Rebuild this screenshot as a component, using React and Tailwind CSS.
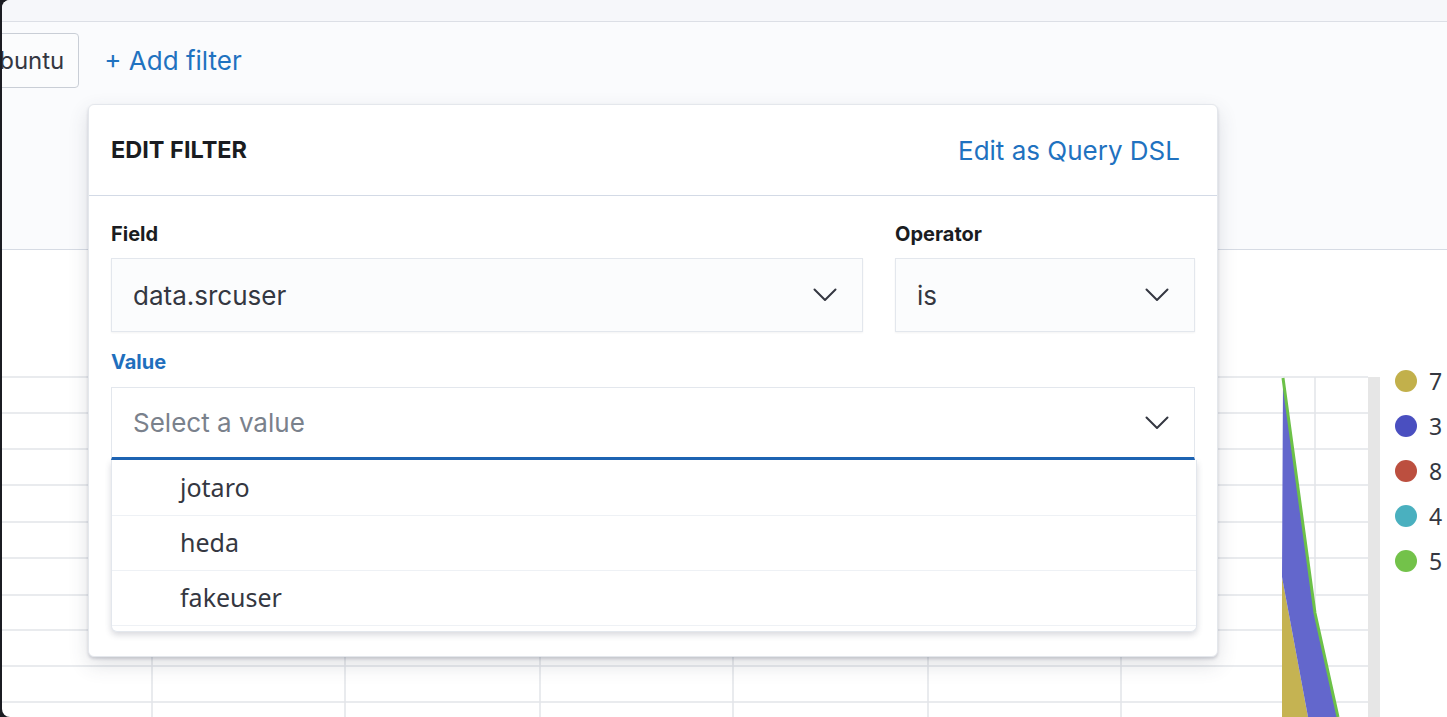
const Chevron = () => (
  <svg width="24" height="14" viewBox="0 0 24 14" fill="none">
    <polyline points="1.5,1.5 12,12 22.5,1.5" stroke="#343741" strokeWidth="2" strokeLinecap="round" strokeLinejoin="round" />
  </svg>
);

const Select = ({ text }) => (
  <div className="h-[74px] bg-[#fbfcfd] border border-[#e3e7ed] shadow-[0_1px_2px_rgba(0,0,0,0.05)] flex items-center justify-between pl-[21px] pr-[25px] text-[26px] text-[#343741]">
    <span>{text}</span>
    <Chevron />
  </div>
);

const hLines = [377, 413, 449, 485, 522, 558, 595, 630, 666, 702];
const vLines = [152, 345, 540, 733, 928, 1121, 1315];

const legend = [
  { c: '#c2b04b', n: '7' },
  { c: '#4a4fc0', n: '3' },
  { c: '#bc4f3f', n: '8' },
  { c: '#4ab0bf', n: '4' },
  { c: '#73c24a', n: '5' },
];

export default function App() {
  return (
    <div className="w-[1447px] h-[717px] bg-[#1b1c22] overflow-hidden font-['Inter',sans-serif]">
      <div className="relative ml-[2px] h-full rounded-l-[8px] overflow-hidden bg-white flex flex-col">
        <div className="h-[22px] shrink-0 bg-[#f6f7fa] border-b border-[#dcdfe6]" />
        <div className="h-[228px] shrink-0 bg-[#fafbfd] border-b border-[#d6dbe4] pt-[11px]">
          <div className="flex items-center gap-[25px]">
            <div className="ml-[-32px] h-[55px] pl-[14px] pr-[14px] flex items-center border border-[#c9ced6] rounded-[4px] bg-[#fbfcfd] text-[24px] text-[#343741]">
              ubuntu
            </div>
            <span className="text-[26px] text-[#1f72c0]">+ Add filter</span>
          </div>
        </div>
        <div className="flex-1 flex">
          <svg width="1393" height="467" viewBox="2 250 1393 467" className="shrink-0">
            {hLines.map((y) => (
              <line key={y} x1="0" x2="1368" y1={y} y2={y} stroke="#e2e4e9" strokeWidth="1.5" />
            ))}
            {vLines.map((x) => (
              <line key={x} x1={x} x2={x} y1="377" y2="717" stroke="#e2e4e9" strokeWidth="1.5" />
            ))}
            <rect x="1368" y="377" width="12" height="340" fill="#e6e6e6" />
            <polygon points="1282,577 1308,717 1282,717" fill="#c5b352" />
            <polygon points="1283,380 1315,613 1338,717 1308,717 1282,577" fill="#6367cc" />
            <polyline points="1283,378 1315,613 1338,717" fill="none" stroke="#6cc148" strokeWidth="3" />
          </svg>
          <div className="flex flex-col gap-[23px] pt-[120px] font-['Noto_Sans',sans-serif]">
            {legend.map((l) => (
              <div key={l.n} className="flex items-center gap-[12px] h-[22px]">
                <div className="w-[22px] h-[22px] rounded-full shrink-0" style={{ backgroundColor: l.c }} />
                <span className="text-[23px] text-[#343741] leading-none">{l.n}</span>
              </div>
            ))}
          </div>
        </div>

        <div className="absolute left-[86px] top-[104px] w-[1130px] h-[553px] bg-white rounded-[6px] border border-[#e4e7ec] shadow-[0_2px_3px_rgba(60,66,90,0.2),0_8px_20px_rgba(60,66,90,0.16)]">
          <div className="h-[91px] flex items-center justify-between pl-[22px] pr-[37px] border-b border-[#d3dae6]">
            <span className="text-[23.5px] font-bold text-[#1a1c21]">EDIT FILTER</span>
            <span className="text-[26px] text-[#1f72c0]">Edit as Query DSL</span>
          </div>
          <div className="px-[22px] pt-[24px]">
            <div className="flex gap-[32px]">
              <div className="w-[752px]">
                <div className="h-[28px] leading-[28px] mb-[10px] text-[20px] font-bold text-[#1a1c21]">Field</div>
                <Select text="data.srcuser" />
              </div>
              <div className="flex-1">
                <div className="h-[28px] leading-[28px] mb-[10px] text-[20px] font-bold text-[#1a1c21]">Operator</div>
                <Select text="is" />
              </div>
            </div>
            <div className="mt-[16px]">
              <div className="h-[28px] leading-[28px] mb-[11px] text-[20px] font-bold text-[#1f6fbd]">Value</div>
              <div className="relative">
                <div className="h-[73px] bg-white border border-[#e3e7ed] border-b-[3px] border-b-[#1e64b4] flex items-center justify-between pl-[21px] pr-[25px] text-[26px] text-[#7a818c]">
                  <span>Select a value</span>
                  <Chevron />
                </div>
                <div className="absolute left-0 top-full w-[1086px] h-[172px] overflow-hidden bg-white border-x border-b border-[#e3e7ed] rounded-b-[6px] shadow-[0_3px_6px_rgba(60,66,90,0.2)] pt-[1px] font-['Noto_Sans',sans-serif] text-[25px] text-[#343741] z-10">
                  {['jotaro', 'heda', 'fakeuser'].map((t) => (
                    <div key={t} className="h-[55px] border-b border-[#eef1f5] pl-[68px] flex items-center">
                      {t}
                    </div>
                  ))}
                  <div className="h-[55px]" />
                </div>
              </div>
            </div>
          </div>
        </div>
      </div>
    </div>
  );
}
